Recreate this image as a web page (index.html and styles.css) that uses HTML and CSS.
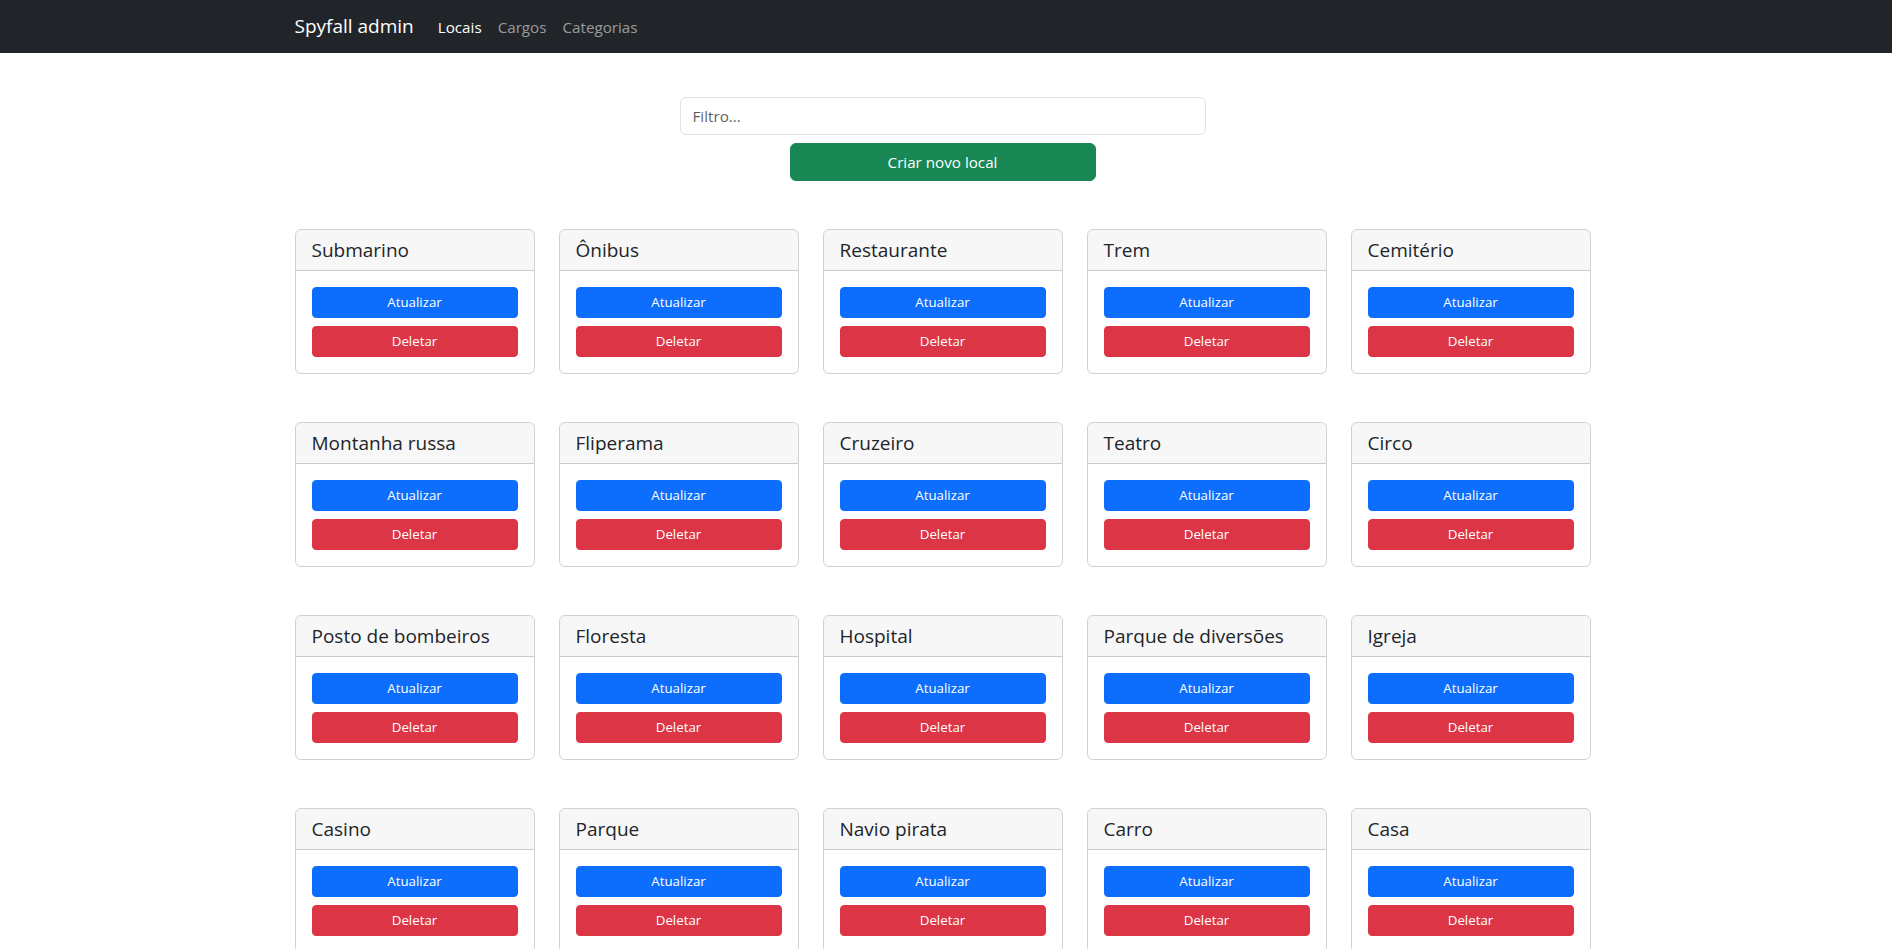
FILE: index.html
```html
<!DOCTYPE html>
<html lang="pt-BR">
<head>
<meta charset="utf-8">
<title>Spyfall admin</title>
<link rel="stylesheet" href="styles.css">
</head>
<body>
<nav class="navbar">
  <div class="nav-inner">
    <a class="brand" href="#">Spyfall admin</a>
    <ul class="nav-links">
      <li><a class="nav-link active" href="#">Locais</a></li>
      <li><a class="nav-link" href="#">Cargos</a></li>
      <li><a class="nav-link" href="#">Categorias</a></li>
    </ul>
  </div>
</nav>
<main class="container">
  <div class="toolbar">
    <input class="filter" type="text" placeholder="Filtro...">
    <button class="btn btn-create">Criar novo local</button>
  </div>
  <div class="grid">
    <div class="card"><div class="card-header"><h5 class="card-title">Submarino</h5></div><div class="card-body"><button class="btn btn-sm btn-primary">Atualizar</button><button class="btn btn-sm btn-danger">Deletar</button></div></div>
    <div class="card"><div class="card-header"><h5 class="card-title">Ônibus</h5></div><div class="card-body"><button class="btn btn-sm btn-primary">Atualizar</button><button class="btn btn-sm btn-danger">Deletar</button></div></div>
    <div class="card"><div class="card-header"><h5 class="card-title">Restaurante</h5></div><div class="card-body"><button class="btn btn-sm btn-primary">Atualizar</button><button class="btn btn-sm btn-danger">Deletar</button></div></div>
    <div class="card"><div class="card-header"><h5 class="card-title">Trem</h5></div><div class="card-body"><button class="btn btn-sm btn-primary">Atualizar</button><button class="btn btn-sm btn-danger">Deletar</button></div></div>
    <div class="card"><div class="card-header"><h5 class="card-title">Cemitério</h5></div><div class="card-body"><button class="btn btn-sm btn-primary">Atualizar</button><button class="btn btn-sm btn-danger">Deletar</button></div></div>
    <div class="card"><div class="card-header"><h5 class="card-title">Montanha russa</h5></div><div class="card-body"><button class="btn btn-sm btn-primary">Atualizar</button><button class="btn btn-sm btn-danger">Deletar</button></div></div>
    <div class="card"><div class="card-header"><h5 class="card-title">Fliperama</h5></div><div class="card-body"><button class="btn btn-sm btn-primary">Atualizar</button><button class="btn btn-sm btn-danger">Deletar</button></div></div>
    <div class="card"><div class="card-header"><h5 class="card-title">Cruzeiro</h5></div><div class="card-body"><button class="btn btn-sm btn-primary">Atualizar</button><button class="btn btn-sm btn-danger">Deletar</button></div></div>
    <div class="card"><div class="card-header"><h5 class="card-title">Teatro</h5></div><div class="card-body"><button class="btn btn-sm btn-primary">Atualizar</button><button class="btn btn-sm btn-danger">Deletar</button></div></div>
    <div class="card"><div class="card-header"><h5 class="card-title">Circo</h5></div><div class="card-body"><button class="btn btn-sm btn-primary">Atualizar</button><button class="btn btn-sm btn-danger">Deletar</button></div></div>
    <div class="card"><div class="card-header"><h5 class="card-title">Posto de bombeiros</h5></div><div class="card-body"><button class="btn btn-sm btn-primary">Atualizar</button><button class="btn btn-sm btn-danger">Deletar</button></div></div>
    <div class="card"><div class="card-header"><h5 class="card-title">Floresta</h5></div><div class="card-body"><button class="btn btn-sm btn-primary">Atualizar</button><button class="btn btn-sm btn-danger">Deletar</button></div></div>
    <div class="card"><div class="card-header"><h5 class="card-title">Hospital</h5></div><div class="card-body"><button class="btn btn-sm btn-primary">Atualizar</button><button class="btn btn-sm btn-danger">Deletar</button></div></div>
    <div class="card"><div class="card-header"><h5 class="card-title">Parque de diversões</h5></div><div class="card-body"><button class="btn btn-sm btn-primary">Atualizar</button><button class="btn btn-sm btn-danger">Deletar</button></div></div>
    <div class="card"><div class="card-header"><h5 class="card-title">Igreja</h5></div><div class="card-body"><button class="btn btn-sm btn-primary">Atualizar</button><button class="btn btn-sm btn-danger">Deletar</button></div></div>
    <div class="card"><div class="card-header"><h5 class="card-title">Casino</h5></div><div class="card-body"><button class="btn btn-sm btn-primary">Atualizar</button><button class="btn btn-sm btn-danger">Deletar</button></div></div>
    <div class="card"><div class="card-header"><h5 class="card-title">Parque</h5></div><div class="card-body"><button class="btn btn-sm btn-primary">Atualizar</button><button class="btn btn-sm btn-danger">Deletar</button></div></div>
    <div class="card"><div class="card-header"><h5 class="card-title">Navio pirata</h5></div><div class="card-body"><button class="btn btn-sm btn-primary">Atualizar</button><button class="btn btn-sm btn-danger">Deletar</button></div></div>
    <div class="card"><div class="card-header"><h5 class="card-title">Carro</h5></div><div class="card-body"><button class="btn btn-sm btn-primary">Atualizar</button><button class="btn btn-sm btn-danger">Deletar</button></div></div>
    <div class="card"><div class="card-header"><h5 class="card-title">Casa</h5></div><div class="card-body"><button class="btn btn-sm btn-primary">Atualizar</button><button class="btn btn-sm btn-danger">Deletar</button></div></div>
  </div>
</main>
</body>
</html>
```

FILE: styles.css
```css
* { box-sizing: border-box; }

html, body {
  margin: 0;
  padding: 0;
}

body {
  font-family: "Open Sans", "Noto Sans", "Liberation Sans", sans-serif;
  font-size: 15.2px;
  line-height: 1.5;
  color: #212529;
  background: #fff;
  padding-right: 7px;
}

.navbar {
  background: #212529;
  height: 53px;
  margin-right: -7px;
  padding-right: 7px;
}

.nav-inner {
  width: 1296px;
  margin: 0 auto;
  height: 100%;
  display: flex;
  align-items: center;
}

.brand {
  font-size: 19px;
  line-height: 30px;
  color: #fff;
  text-decoration: none;
  margin-right: 16px;
  padding-bottom: 2px;
}

.nav-links {
  list-style: none;
  margin: 0;
  padding: 0;
  display: flex;
}

.nav-link {
  display: block;
  padding: 0 8px;
  font-size: 15.2px;
  line-height: 24px;
  color: rgba(255, 255, 255, 0.55);
  text-decoration: none;
}

.nav-link.active {
  color: #fff;
}

.container {
  width: 1296px;
  margin: 0 auto;
}

.toolbar {
  display: flex;
  flex-direction: column;
  align-items: center;
  padding-top: 44px;
}

.filter {
  width: 526px;
  height: 38px;
  padding: 6px 12px;
  font: inherit;
  font-size: 15.2px;
  color: #212529;
  border: 1px solid #dee2e6;
  border-radius: 6px;
  outline: none;
}

.filter::placeholder {
  color: rgba(33, 37, 41, 0.75);
}

.btn {
  font-family: inherit;
  border: 1px solid transparent;
  color: #fff;
  cursor: pointer;
  text-align: center;
}

.btn-create {
  margin-top: 8px;
  width: 306px;
  height: 38px;
  font-size: 15.2px;
  line-height: 24px;
  background: #198754;
  border-color: #198754;
  border-radius: 6px;
}

.grid {
  margin-top: 48px;
  display: grid;
  grid-template-columns: repeat(5, 240px);
  column-gap: 24px;
  row-gap: 48px;
}

.card {
  border: 1px solid rgba(0, 0, 0, 0.175);
  border-radius: 6px;
  overflow: hidden;
}

.card-header {
  background: rgba(0, 0, 0, 0.03);
  border-bottom: 1px solid rgba(0, 0, 0, 0.175);
  padding: 8px 16px;
}

.card-title {
  margin: 0;
  font-size: 19px;
  font-weight: 500;
  line-height: 24px;
}

.card-body {
  padding: 16px;
  display: flex;
  flex-direction: column;
  gap: 8px;
}

.btn-sm {
  height: 31px;
  font-size: 13.3px;
  line-height: 21px;
  padding: 4px 8px;
  border-radius: 4px;
}

.btn-primary {
  background: #0d6efd;
  border-color: #0d6efd;
}

.btn-danger {
  background: #dc3545;
  border-color: #dc3545;
}
```
